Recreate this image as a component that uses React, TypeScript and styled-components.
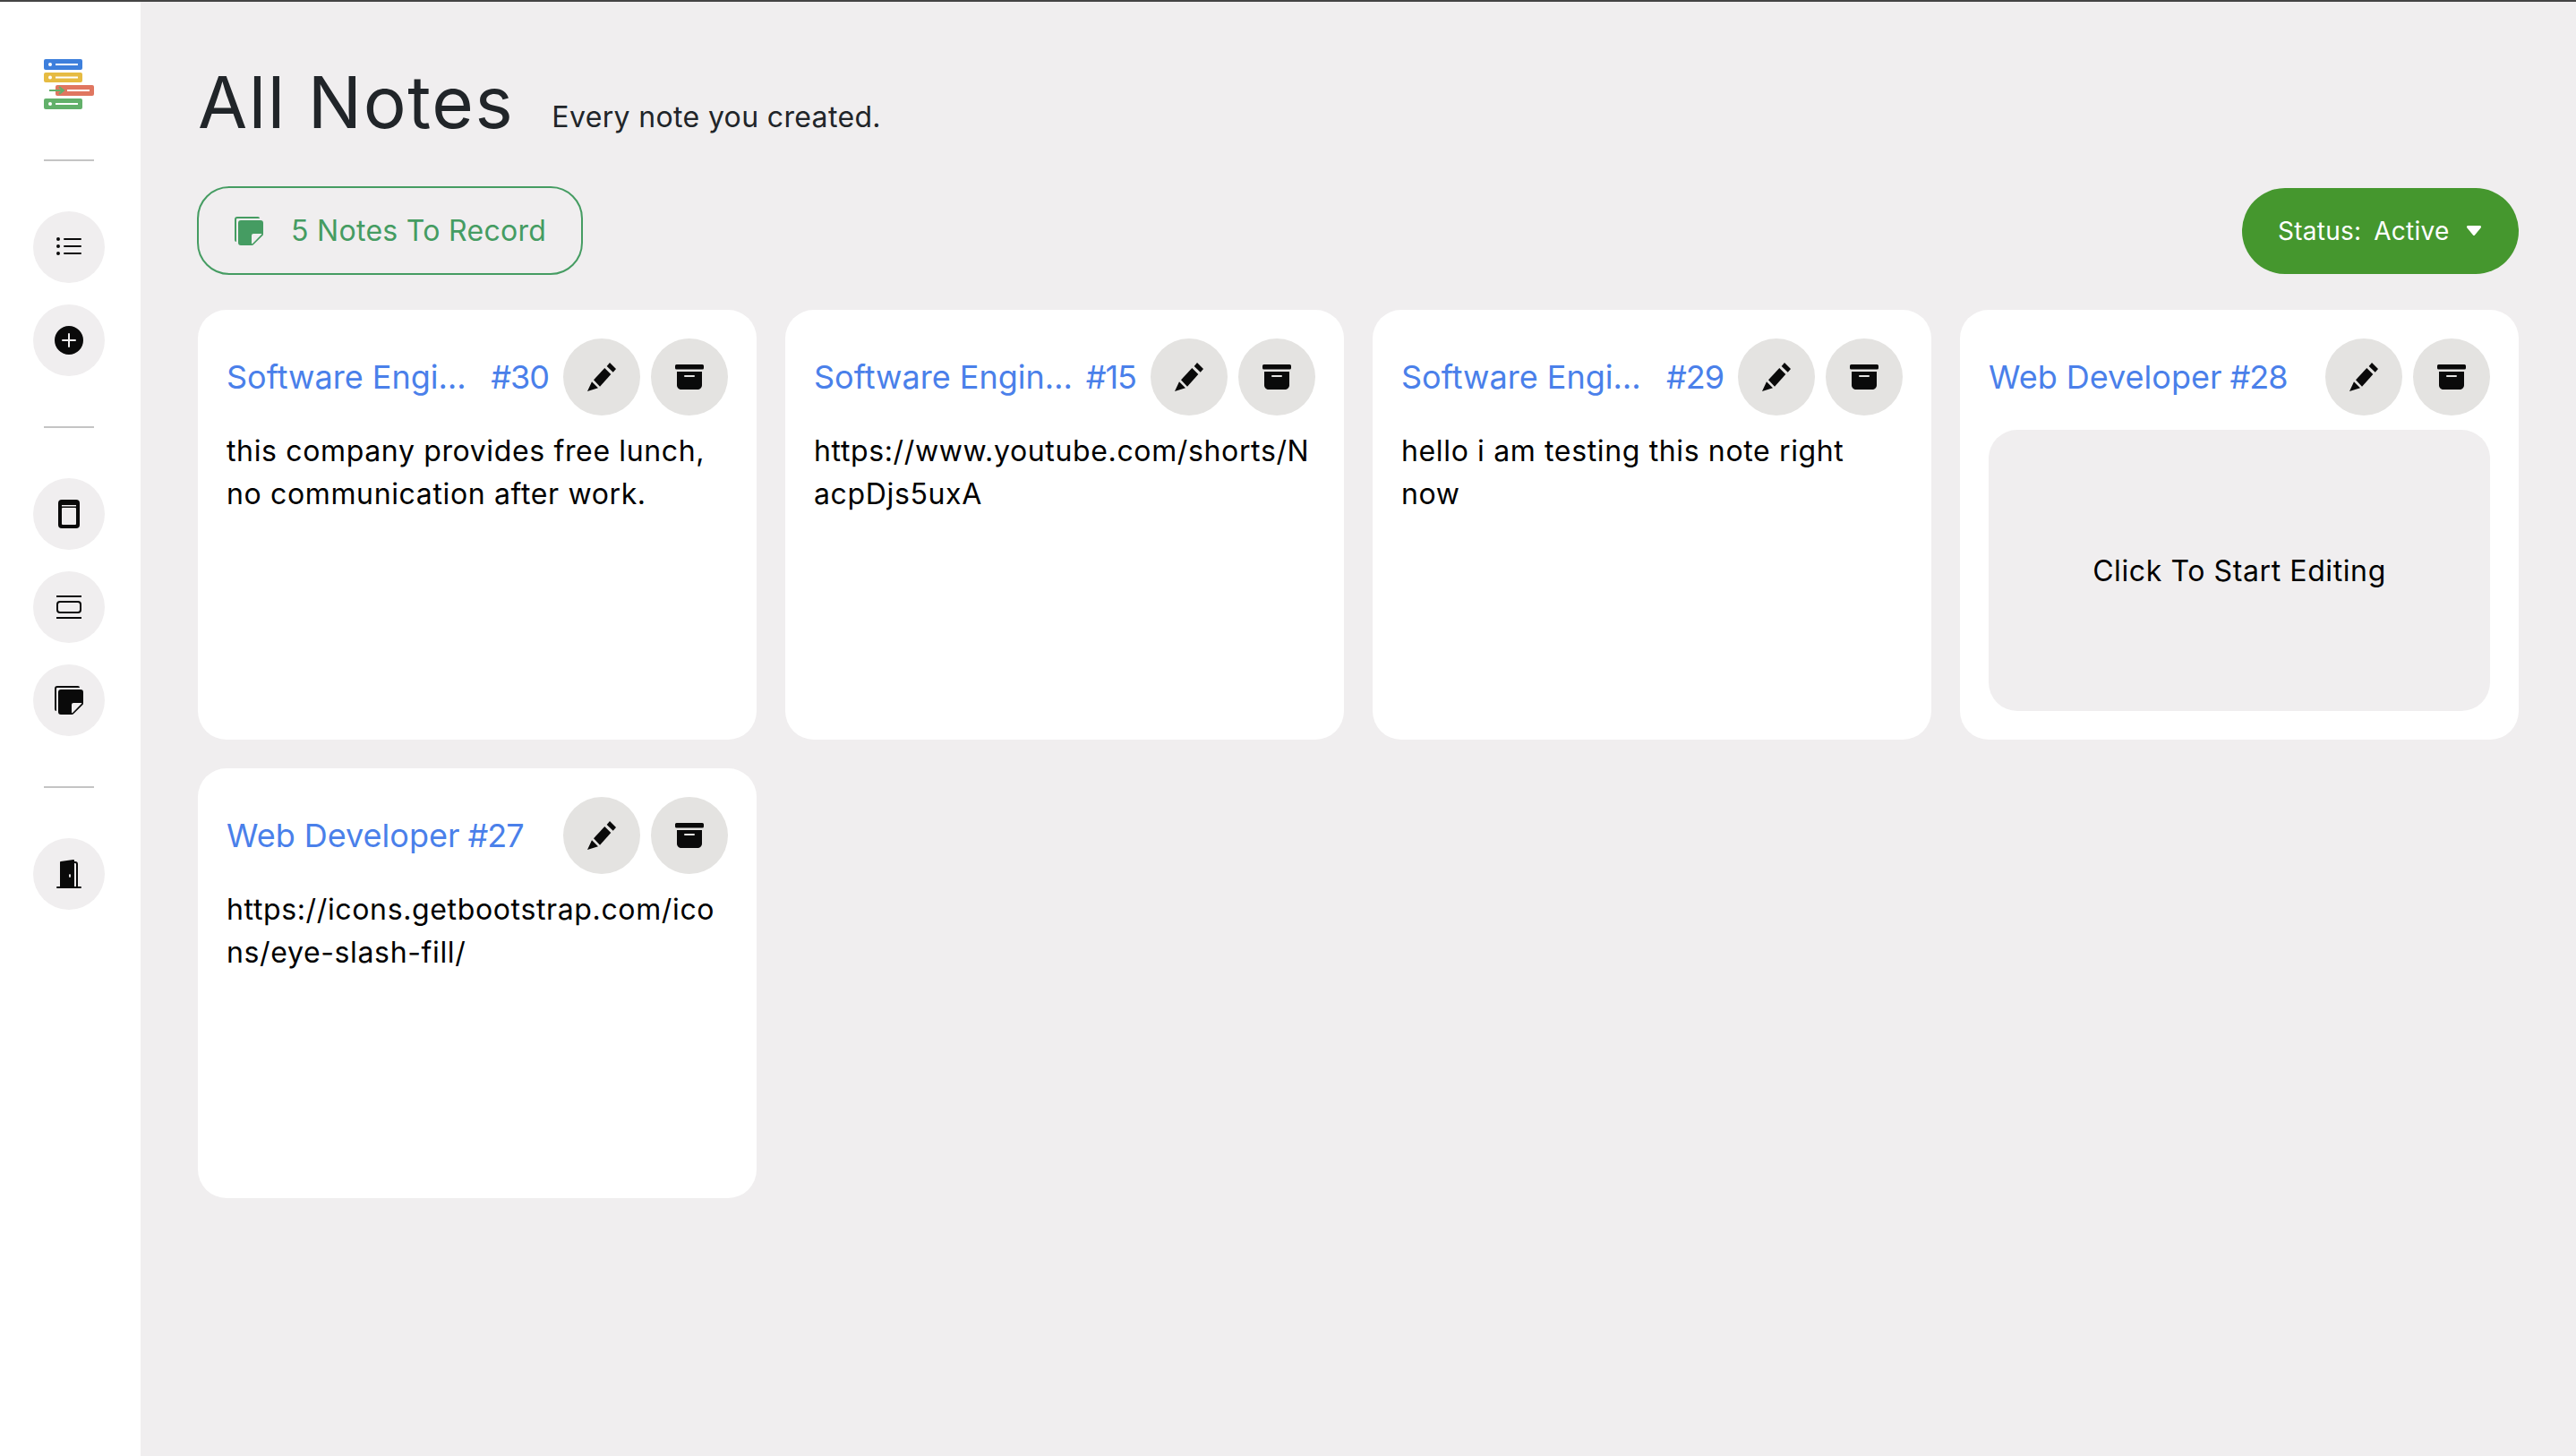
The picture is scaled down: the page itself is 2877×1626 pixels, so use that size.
import { createGlobalStyle, styled } from 'styled-components';
import { BsListUl, BsPlusCircleFill, BsStickiesFill, BsDoorOpenFill, BsArchiveFill } from 'react-icons/bs';

type Note = {
  id: number;
  title: string;
  body?: string;
};

const notes: Note[] = [
  { id: 30, title: 'Software Engineer', body: 'this company provides free lunch, no communication after work.' },
  { id: 15, title: 'Software Engineer', body: 'https://www.youtube.com/shorts/NacpDjs5uxA' },
  { id: 29, title: 'Software Engineer', body: 'hello i am testing this note right now' },
  { id: 28, title: 'Web Developer' },
  { id: 27, title: 'Web Developer', body: 'https://icons.getbootstrap.com/icons/eye-slash-fill/' },
];

const GlobalStyle = createGlobalStyle`
  html, body {
    margin: 0;
    padding: 0;
    height: 100%;
    background: #f0eeef;
    font-family: Inter, 'Liberation Sans', sans-serif;
  }
  * {
    box-sizing: border-box;
  }
`;

const Page = styled.div`
  display: flex;
  height: 1626px;
  border-top: 2px solid #444444;
  background: #f0eeef;
`;

const Sidebar = styled.nav`
  display: flex;
  flex-direction: column;
  align-items: center;
  gap: 56px;
  flex: 0 0 157px;
  padding: 64px 3px 0 0;
  background: #ffffff;
`;

const Divider = styled.hr`
  width: 56px;
  height: 2px;
  margin: 0;
  border: 0;
  background: #c4c4c4;
`;

const NavGroup = styled.div`
  display: flex;
  flex-direction: column;
  gap: 24px;
`;

const NavButton = styled.button`
  display: flex;
  align-items: center;
  justify-content: center;
  width: 80px;
  height: 80px;
  padding: 0;
  border: 0;
  border-radius: 50%;
  background: #f0eeef;
  color: #0a0a0a;
`;

const Main = styled.main`
  flex: 1;
  min-width: 0;
  padding: 0 64px;
`;

const Heading = styled.header`
  display: flex;
  align-items: baseline;
  gap: 42px;
  height: 206px;
  padding-top: 64px;
  color: #212529;
`;

const Title = styled.h1`
  margin: 0;
  font-size: 80px;
  font-weight: 400;
  line-height: 96px;
  letter-spacing: 1.6px;
`;

const Subtitle = styled.span`
  font-size: 32px;
  letter-spacing: 0.35px;
  position: relative;
  top: -1px;
`;

const Toolbar = styled.div`
  display: flex;
  align-items: center;
  justify-content: space-between;
  height: 99px;
  margin-bottom: 39px;
`;

const CountBadge = styled.div`
  display: flex;
  align-items: center;
  gap: 31px;
  width: 431px;
  height: 99px;
  margin-left: -1px;
  padding-left: 40px;
  border: 2px solid #459c62;
  border-radius: 36px;
  color: #459c62;
  font-size: 32px;
  letter-spacing: 0.3px;
`;

const StatusButton = styled.button`
  display: flex;
  align-items: center;
  width: 309px;
  height: 96px;
  padding: 0 0 0 40px;
  border: 0;
  border-radius: 48px;
  background: #45972e;
  color: #ffffff;
  font-family: inherit;
  font-size: 28px;
  letter-spacing: 0.25px;
`;

const StatusValue = styled.span`
  margin-left: 14px;
`;

const Caret = styled.svg`
  margin-left: 19px;
`;

const Grid = styled.section`
  display: grid;
  grid-template-columns: repeat(4, 624px);
  grid-auto-rows: 480px;
  gap: 32px;
`;

const Card = styled.article`
  display: flex;
  flex-direction: column;
  gap: 16px;
  padding: 32px;
  border-radius: 32px;
  background: #ffffff;
`;

const CardHeader = styled.div`
  display: flex;
  align-items: center;
  gap: 16px;
  height: 86px;
  color: #4a80ea;
  font-size: 36px;
`;

const CardTitle = styled.div`
  display: flex;
  flex: 1;
  min-width: 0;
`;

const Name = styled.span`
  overflow: hidden;
  white-space: nowrap;
  text-overflow: ellipsis;
`;

const NoteId = styled.span`
  flex: none;
  margin-left: 9px;
  letter-spacing: -1px;
`;

const Actions = styled.div`
  display: flex;
  flex: none;
  gap: 12px;
`;

const ActionButton = styled.button`
  display: flex;
  align-items: center;
  justify-content: center;
  width: 86px;
  height: 86px;
  padding: 0;
  border: 0;
  border-radius: 50%;
  background: #e4e3e1;
  color: #0a0a0a;
`;

const Body = styled.p`
  margin: 0;
  color: #000000;
  font-size: 32px;
  line-height: 48px;
  letter-spacing: 0.64px;
  overflow-wrap: anywhere;
`;

const EmptyNote = styled.div`
  display: flex;
  flex: 1;
  align-items: center;
  justify-content: center;
  border-radius: 32px;
  background: #f0eeef;
  color: #000000;
  font-size: 32px;
  letter-spacing: 0.6px;
`;

function Logo() {
  return (
    <svg width="56" height="56" viewBox="0 0 56 56">
      <rect x="0" y="0" width="43" height="12" rx="2" fill="#3d7fdc" />
      <rect x="0" y="15" width="43" height="11" rx="2" fill="#e6bb42" />
      <rect x="13" y="29" width="43" height="12" rx="2" fill="#e07660" />
      <rect x="0" y="44" width="43" height="12" rx="2" fill="#62b06a" />
      <g fill="#ffffff">
        <circle cx="7" cy="6" r="2" />
        <circle cx="7" cy="20.5" r="2" />
        <circle cx="7" cy="50" r="2" />
        <rect x="13" y="5" width="25" height="2" />
        <rect x="13" y="19.5" width="25" height="2" />
        <rect x="26" y="34" width="25" height="2" />
        <rect x="13" y="49" width="25" height="2" />
      </g>
      <path d="M6 35h15M17 31l5 4-5 4" fill="none" stroke="#62b06a" strokeWidth="2" />
    </svg>
  );
}

function CardsIcon() {
  return (
    <svg width="24" height="32" viewBox="0 0 24 32">
      <rect width="24" height="32" rx="4" fill="#0a0a0a" />
      <rect x="4" y="6" width="16" height="1.5" fill="#f0eeef" />
      <rect x="4" y="9" width="16" height="19" rx="1" fill="#f0eeef" />
    </svg>
  );
}

function RowsIcon() {
  return (
    <svg width="28" height="26" viewBox="0 0 28 26">
      <rect width="28" height="2" fill="#0a0a0a" />
      <rect x="1" y="7" width="26" height="12" rx="3" fill="none" stroke="#0a0a0a" strokeWidth="2" />
      <rect y="24" width="28" height="2" fill="#0a0a0a" />
    </svg>
  );
}

function PencilIcon() {
  return (
    <svg width="32" height="32" viewBox="0 0 32 32" fill="#0a0a0a">
      <path d="M25 0l7 7-3.3 3.7-7-6.7z" />
      <path d="M19.3 6l7 7L14 26.7 7 19.3z" />
      <path d="M5 21.3l7 7L0 32z" />
    </svg>
  );
}

export default function App() {
  return (
    <Page>
      <GlobalStyle />
      <Sidebar>
        <Logo />
        <Divider />
        <NavGroup>
          <NavButton>
            <BsListUl size={32} />
          </NavButton>
          <NavButton>
            <BsPlusCircleFill size={32} />
          </NavButton>
        </NavGroup>
        <Divider />
        <NavGroup>
          <NavButton>
            <CardsIcon />
          </NavButton>
          <NavButton>
            <RowsIcon />
          </NavButton>
          <NavButton>
            <BsStickiesFill size={32} />
          </NavButton>
        </NavGroup>
        <Divider />
        <NavGroup>
          <NavButton>
            <BsDoorOpenFill size={32} />
          </NavButton>
        </NavGroup>
      </Sidebar>
      <Main>
        <Heading>
          <Title>All Notes</Title>
          <Subtitle>Every note you created.</Subtitle>
        </Heading>
        <Toolbar>
          <CountBadge>
            <BsStickiesFill size={32} />
            <span>{notes.length} Notes To Record</span>
          </CountBadge>
          <StatusButton>
            <span>Status:</span>
            <StatusValue>Active</StatusValue>
            <Caret width="16" height="11" viewBox="0 0 16 11">
              <path d="M0 1.5C0 .5.5 0 1.5 0h13c1 0 1.5.5 1.5 1.5 0 .4-.2.7-.4 1L9 10.400c-.5.7-1.500.7-2 0L.4 2.500C.2 2.200 0 1.900 0 1.500z" fill="#ffffff" />
            </Caret>
          </StatusButton>
        </Toolbar>
        <Grid>
          {notes.map((note) => (
            <Card key={note.id}>
              <CardHeader>
                <CardTitle>
                  <Name>{note.title}</Name>
                  <NoteId>#{note.id}</NoteId>
                </CardTitle>
                <Actions>
                  <ActionButton>
                    <PencilIcon />
                  </ActionButton>
                  <ActionButton>
                    <BsArchiveFill size={32} />
                  </ActionButton>
                </Actions>
              </CardHeader>
              {note.body ? <Body>{note.body}</Body> : <EmptyNote>Click To Start Editing</EmptyNote>}
            </Card>
          ))}
        </Grid>
      </Main>
    </Page>
  );
}
